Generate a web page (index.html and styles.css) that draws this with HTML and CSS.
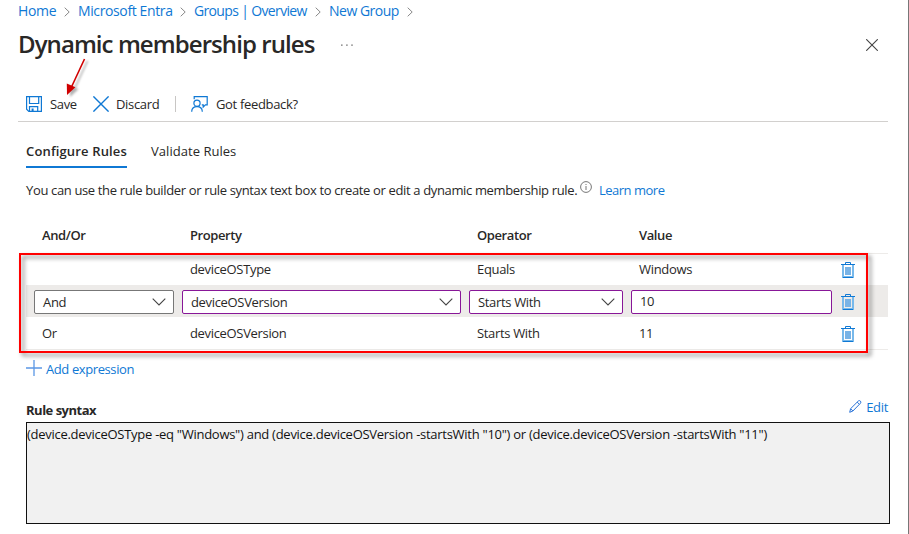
FILE: index.html
```html
<!DOCTYPE html>
<html lang="en">
<head>
<meta charset="utf-8">
<title>Dynamic membership rules</title>
<link rel="stylesheet" href="styles.css">
</head>
<body>
<svg class="defs" width="0" height="0" aria-hidden="true">
  <symbol id="sep" viewBox="0 0 6 10"><path d="M.7.7 5.2 5 .7 9.3" fill="none" stroke="#888" /></symbol>
  <symbol id="chevron" viewBox="0 0 14 8"><path d="M.7.7 7 6.9 13.3.7" fill="none" stroke="#444" stroke-width="1.1"/></symbol>
  <symbol id="trash" viewBox="0 0 14 16">
    <path d="M2 3v12h10V3" fill="none" stroke="#78b9eb" stroke-width="2"/>
    <path d="M4 5h6v8H4z" fill="#78b3e6"/>
    <path d="M0 2.5h14M2 15.5h10" stroke="#0f78d4"/>
    <path d="M4.5 2V.5h5V2" fill="none" stroke="#0f78d4"/>
  </symbol>
</svg>
<main class="page">
  <nav class="crumbs">
    <a class="c1">Home</a><svg><use href="#sep"/></svg>
    <a class="c2">Microsoft Entra</a><svg><use href="#sep"/></svg>
    <a class="c3">Groups | Overview</a><svg><use href="#sep"/></svg>
    <a class="c4">New Group</a><svg><use href="#sep"/></svg>
  </nav>
  <header class="title">
    <h1>Dynamic membership rules</h1>
    <svg class="more" viewBox="0 0 12 2"><path d="M0 .5h1.6v1.2H0zM5.1.5h1.6v1.2H5.1zM10.2.5h1.6v1.2h-1.6z" fill="#777"/></svg>
    <svg class="close" viewBox="0 0 12 12"><path d="m.2.2 11.6 11.6M11.8.2.2 11.8" stroke="#444" stroke-width="1.1"/></svg>
  </header>
  <div class="toolbar">
    <svg class="i-save" viewBox="0 0 16 16"><path d="M.6.6h14.8v14.8H2.8L.6 13.2zM3.5.6v6.9h9.2V.6M3.5 15.4v-4.8h8.2v4.8" fill="none" stroke="#0f78d4" stroke-width="1.2"/><path d="M5.6 12.5h2v3h-2z" fill="#0f78d4"/></svg>
    <span class="t-save">Save</span>
    <svg class="i-x" viewBox="0 0 16 16"><path d="m.4.4 15.2 15.2M15.6.4.4 15.6" stroke="#0f78d4" stroke-width="1.4"/></svg>
    <span class="t-discard">Discard</span>
    <i class="divider"></i>
    <svg class="i-feedback" viewBox="0 0 17 16"><g fill="none" stroke="#0f78d4" stroke-width="1.2"><path d="M3.2 3.2V.7h13v8.1h-1.8l-2.2 2.3V8.8h-1.4"/><circle cx="6" cy="7.2" r="3.1"/><path d="M.7 15.8c0-3.1 2.1-5.2 5.3-5.2s5.3 2.1 5.3 5.2"/></g></svg>
    <span class="t-feedback">Got feedback?</span>
  </div>
  <section class="content">
    <div class="tabs"><span class="tab on">Configure Rules</span><span class="tab">Validate Rules</span></div>
    <p class="intro"><span class="desc">You can use the rule builder or rule syntax text box to create or edit a dynamic membership rule.</span>
      <svg viewBox="0 0 12 12"><circle cx="6" cy="6" r="5.4" fill="none" stroke="#777"/><path d="M6 5v4M6 3v1" stroke="#777"/></svg>
      <a>Learn more</a></p>
    <div class="rules">
      <div class="row head"><span>And/Or</span><span>Property</span><span>Operator</span><span>Value</span></div>
      <div class="row first"><span></span><span>deviceOSType</span><span>Equals</span><span>Windows</span><svg class="bin"><use href="#trash"/></svg></div>
      <div class="row edit">
        <div class="box grey"><span>And</span><svg><use href="#chevron"/></svg></div>
        <div class="box"><span>deviceOSVersion</span><svg><use href="#chevron"/></svg></div>
        <div class="box"><span>Starts With</span><svg><use href="#chevron"/></svg></div>
        <div class="box val"><span>10</span></div>
        <svg class="bin"><use href="#trash"/></svg>
      </div>
      <div class="row last"><span>Or</span><span>deviceOSVersion</span><span>Starts With</span><span>11</span><svg class="bin"><use href="#trash"/></svg></div>
      <div class="highlight"></div>
    </div>
    <div class="add"><svg viewBox="0 0 16 16"><path d="M8 0v16M0 8h16" stroke="#5b97e5" stroke-width="1.3"/></svg><a>Add expression</a></div>
    <div class="syntax-head"><b>Rule syntax</b>
      <span class="edit-link"><svg viewBox="0 0 13 13"><path d="m.7 12.3.9-3.6L9.3 1q1.1-.9 2.1.1t.1 2.1L3.9 11zM8.2 2.1l2.2 2.2M1.6 8.7 3.9 11" fill="none" stroke="#2b74d8"/></svg><a>Edit</a></span></div>
    <div class="syntax"><span>(device.deviceOSType -eq "Windows") and (device.deviceOSVersion -startsWith "10") or (device.deviceOSVersion -startsWith "11")</span></div>
  </section>
  <svg class="arrow" viewBox="0 0 28 42"><path d="M23.5 1 10 30" stroke="#d00000" stroke-width="1.6"/><path d="M6 37 5.8 25.4 14.4 29.2z" fill="#d00000"/></svg>
</main>
</body>
</html>
```
FILE: styles.css
```css
* { box-sizing: border-box; }
body { margin: 0; background: #fff; color: #292827; font: 13px/18px "Open Sans", "Noto Sans", sans-serif; letter-spacing: -0.33px; white-space: nowrap; overflow: hidden; }
svg { display: block; flex: none; }
.defs { position: absolute; }
a { color: #0f78d4; }
.page { position: relative; width: 909px; height: 534px; border-right: 1px solid #777; padding-left: 18px; }
.crumbs { display: flex; align-items: center; height: 23px; padding-bottom: 1px; font-size: 14px; }
.crumbs svg { width: 6px; height: 10px; margin: 1px 8px 0; }
.crumbs a { flex: none; margin-top: -1px; }
.c1 { width: 38px; }
.c2 { width: 94px; letter-spacing: -0.38px; }
.c3 { width: 113px; letter-spacing: -0.65px; }
.c4 { width: 70px; letter-spacing: -0.5px; }
.title { display: flex; align-items: center; height: 44px; }
h1 { margin: -2px 0 0; width: 297px; font-size: 24px; line-height: 32px; font-weight: 600; letter-spacing: -0.93px; }
.more { width: 12px; height: 2px; margin-left: 26px; }
.close { width: 12px; height: 12px; margin-left: 513px; }
.toolbar { display: flex; align-items: center; width: 870px; height: 55px; padding: 19px 0 0 8px; border-bottom: 1px solid #d2d0ce; }
.i-save { width: 16px; height: 16px; }
.t-save { width: 27px; margin-left: 8px; }
.i-x { width: 16px; height: 16px; margin-left: 16px; }
.t-discard { width: 43px; margin-left: 7px; }
.divider { width: 1px; height: 16px; margin-left: 16px; background: #c8c6c4; }
.i-feedback { width: 17px; height: 16px; margin-left: 15px; }
.t-feedback { margin-left: 8px; }
.content { padding-left: 8px; }
.tabs { display: flex; gap: 24px; height: 46px; padding-top: 20px; }
.tab { height: 26px; letter-spacing: 0.04px; }
.on { width: 101px; font-weight: 600; letter-spacing: 0.15px; border-bottom: 2px solid #0f78d4; }
.intro { display: flex; align-items: center; height: 44px; margin: 0; }
.desc { width: 552px; letter-spacing: -0.355px; }
.intro a { letter-spacing: -0.5px; }
.intro svg { width: 12px; height: 12px; margin: -6px 7px 0 2px; }
.rules { position: relative; width: 862px; height: 138px; margin-top: -4px; }
.row { display: grid; grid-template-columns: 148px 287px 162px 202px 14px; align-items: center; height: 32px; padding-left: 16px; border-bottom: 1px solid #edebe9; }
.row > span { margin-top: -2px; }
.head { height: 46px; padding-top: 10px; font-weight: 600; letter-spacing: -0.4px; }
.rules .edit { display: flex; gap: 8px; padding-left: 8px; background: #edebe9; border-bottom-color: #fff; }
.box { display: flex; align-items: center; justify-content: space-between; width: 279px; height: 24px; padding: 0 7px 0 8px; border: 1px solid #881798; border-radius: 2px; background: #fff; }
.box svg { width: 14px; height: 8px; }
.grey { width: 140px; border-color: #777; }
.box:nth-child(3) { width: 154px; }
.box.val { width: 201px; padding-bottom: 2px; }
.bin { width: 14px; height: 16px; }
.edit .bin { margin-left: 1px; }
.highlight { position: absolute; left: -7px; top: 45px; width: 849px; height: 100px; border: 2px solid #f00; filter: drop-shadow(3px 3px 2px rgba(0,0,0,.5)); }
.add { display: flex; align-items: center; height: 18px; margin-top: 14px; }
.add a { letter-spacing: -0.4px; }
.add svg { width: 16px; height: 16px; margin: -2px 4px 0 0; }
.syntax-head { display: flex; justify-content: space-between; width: 862px; margin-top: 23px; height: 21px; }
.syntax-head b { letter-spacing: -0.5px; }
.edit-link { display: flex; height: 18px; margin-top: -3px; align-items: center; }
.edit-link svg { width: 13px; height: 13px; margin: -2px 4px 0 0; }
.syntax { width: 864px; height: 102px; padding: 2px 0 0; border: 1px solid #111; background: #f1f1f1; color: #111; letter-spacing: -0.275px; }
.arrow { position: absolute; left: 61px; top: 58px; width: 28px; height: 42px; filter: drop-shadow(3px 2px 1px rgba(0,0,0,.3)); }
```
